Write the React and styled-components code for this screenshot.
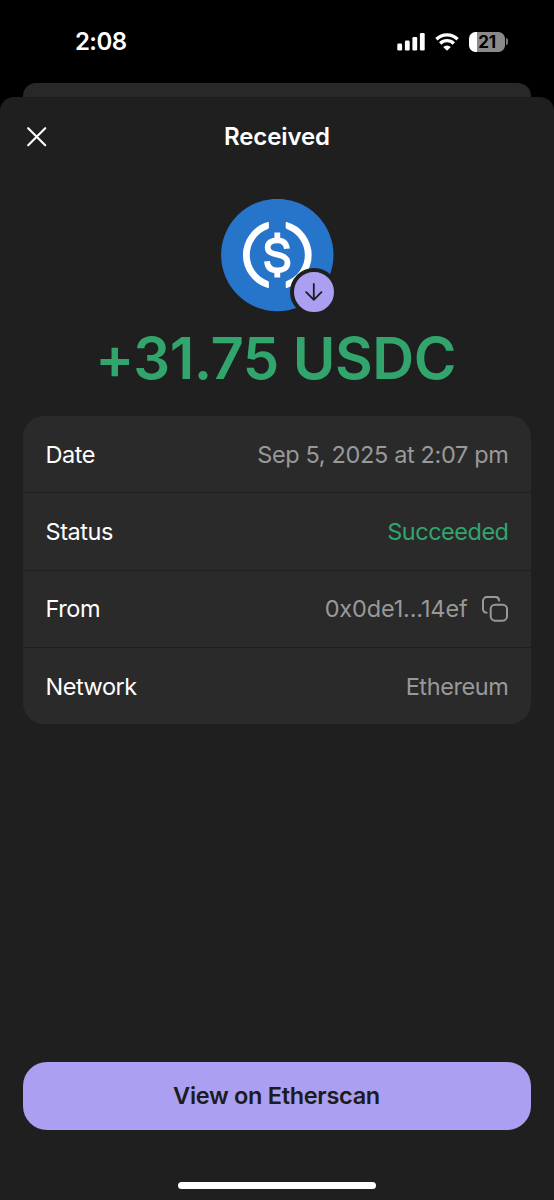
import styled, { createGlobalStyle } from 'styled-components'

const details = [
  { label: 'Date', value: 'Sep 5, 2025 at 2:07 pm', spacing: '-0.35px' },
  { label: 'Status', value: 'Succeeded', tone: 'success', spacing: '-0.5px' },
  { label: 'From', value: '0x0de1...14ef', copy: true, spacing: '-0.15px' },
  { label: 'Network', value: 'Ethereum', spacing: '-0.4px' },
]

export default function App() {
  return (
    <Screen>
      <GlobalStyle />
      <StatusBar>
        <Time>2:08</Time>
        <Indicators>
          <SignalIcon />
          <WifiIcon />
          <Battery>
            <BatteryBody>21</BatteryBody>
            <BatteryCap />
          </Battery>
        </Indicators>
      </StatusBar>
      <BackSheet />
      <Sheet>
        <Header>
          <CloseButton aria-label="Close"><CloseIcon /></CloseButton>
          <Title>Received</Title>
        </Header>
        <Token>
          <UsdcIcon />
          <Badge><ArrowIcon /></Badge>
        </Token>
        <Amount>+31.75 USDC</Amount>
        <Card>
          {details.map((item) => (
            <Row key={item.label}>
              <Label>{item.label}</Label>
              <Value $tone={item.tone} $spacing={item.spacing}>
                {item.value}
                {item.copy && <CopyIcon />}
              </Value>
            </Row>
          ))}
        </Card>
        <Action>View on Etherscan</Action>
        <HomeIndicator />
      </Sheet>
    </Screen>
  )
}


////////////////////////////////////////////////////
// Icons
////////////////////////////////////////////////////

function SignalIcon() {
  return (
    <svg width="28" height="18" viewBox="0 0 28 18" fill="#fff">
      <rect x="0.3" y="10.6" width="4.8" height="7" rx="1.3" />
      <rect x="7.9" y="7.6" width="4.8" height="10" rx="1.3" />
      <rect x="15.4" y="4" width="4.8" height="13.6" rx="1.3" />
      <rect x="22.9" y="0" width="4.8" height="17.6" rx="1.3" />
    </svg>
  )
}

function WifiIcon() {
  return (
    <svg width="24" height="18" viewBox="0 0 24 18" fill="none" stroke="#fff">
      <path d="M1.4 6.2a15.2 15.2 0 0 1 21.2 0" strokeWidth="3.4" />
      <path d="M5.2 10.5a9.7 9.7 0 0 1 13.6 0" strokeWidth="3.3" />
      <path d="M8.2 13.9a5.5 5.5 0 0 1 7.6 0L12 17.8z" fill="#fff" stroke="none" />
    </svg>
  )
}

function CloseIcon() {
  return (
    <svg width="20" height="20" viewBox="0 0 20 20" fill="none" stroke="#fff" strokeWidth="2.1" strokeLinecap="round">
      <path d="M1.2 1.2l17 17M18.2 1.2L1.2 18.2" />
    </svg>
  )
}

function UsdcIcon() {
  return (
    <svg width="113" height="113" viewBox="-56.3 -56 113 113" fill="none">
      <circle r="56.2" fill="#2775ca" />
      <g fill="#fff">
        <path d="M-8.4 -32.2V-27.4Q-8.4 -26.4 -9.4 -26A27.7 27.7 0 0 0 -9.4 26Q-8.4 26.4 -8.4 27.4V32.2Q-8.4 33.3 -9.5 32.9A34.2 34.2 0 0 1 -9.5 -32.9Q-8.4 -33.3 -8.4 -32.2Z" />
        <path d="M8.4 -32.2V-27.4Q8.4 -26.4 9.4 -26A27.7 27.7 0 0 1 9.4 26Q8.4 26.4 8.4 27.4V32.2Q8.4 33.3 9.5 32.9A34.2 34.2 0 0 0 9.5 -32.9Q8.4 -33.3 8.4 -32.2Z" />
      </g>
      <g stroke="#fff" strokeWidth="5.8">
        <path d="M9.6 -6.2C9 -12 5.3 -14.7 0 -14.7C-6 -14.7 -9.6 -12 -9.6 -7.8C-9.6 -2.8 -5.5 -1.4 0 -0.3C6.5 1 10.2 2.8 10.2 8C10.2 12.7 6 15.4 0 15.4C-6 15.4 -9.8 12.3 -10.3 6.2" />
        <path d="M0 -22.6V-15M0 15V22.6" />
      </g>
    </svg>
  )
}

function ArrowIcon() {
  return (
    <svg width="18" height="18" viewBox="0 0 18 18" fill="none" stroke="#1c1c1c" strokeWidth="1.8" strokeLinecap="round" strokeLinejoin="round">
      <path d="M8.8 1v15.8M1.2 9.2l7.6 7.6 7.6-7.6" />
    </svg>
  )
}

function CopyIcon() {
  return (
    <svg width="26" height="26" viewBox="0 0 26 26" fill="none" stroke="#999" strokeWidth="2" strokeLinecap="round">
      <rect x="8.7" y="8.7" width="16.3" height="16" rx="4.4" />
      <path d="M17.1 4.4A3.8 3.8 0 0 0 13.4 0.9H5.2A4.2 4.2 0 0 0 1 5.1V12.7A4 4 0 0 0 4.6 16.7" />
    </svg>
  )
}


////////////////////////////////////////////////////
// Styles
////////////////////////////////////////////////////

const GlobalStyle = createGlobalStyle`
  * {
    box-sizing: border-box;
  }
  body {
    margin: 0;
    background: #000;
    font-family: Inter, "Liberation Sans", sans-serif;
    -webkit-font-smoothing: antialiased;
  }
  svg {
    display: block;
    flex: none;
  }
`

const Screen = styled.div`
  display: flex;
  flex-direction: column;
  width: 554px;
  height: 1200px;
  overflow: hidden;
  background: #000;
  color: #fff;
`

const StatusBar = styled.div`
  display: flex;
  justify-content: space-between;
  align-items: center;
  height: 83px;
  padding: 0 46px 0 75px;
`

const Time = styled.div`
  font-size: 24px;
  font-weight: 600;
  letter-spacing: -0.6px;
`

const Indicators = styled.div`
  display: flex;
  align-items: center;
  gap: 10px;
`

const Battery = styled.div`
  display: flex;
  align-items: center;
  gap: 1px;
`

const BatteryBody = styled.div`
  width: 36px;
  height: 20px;
  border-radius: 6.5px;
  background: linear-gradient(90deg, #fff 22%, #8a8a8a 22%);
  color: #000;
  font-size: 17px;
  font-weight: 700;
  letter-spacing: -0.3px;
  line-height: 20px;
  text-align: center;
`

const BatteryCap = styled.div`
  width: 2px;
  height: 7px;
  border-radius: 0 3px 3px 0;
  background: #777;
`

const BackSheet = styled.div`
  flex: none;
  height: 14px;
  margin: 0 23px;
  border-radius: 13px 13px 0 0;
  background: #282829;
`

const Sheet = styled.main`
  flex: 1;
  display: flex;
  flex-direction: column;
  align-items: center;
  padding: 0 23px 11px;
  border-radius: 14px 14px 0 0;
  background: #1f1f1f;
`

const Header = styled.header`
  display: grid;
  grid-template-columns: 28px 1fr 28px;
  align-items: center;
  width: 100%;
  height: 79px;
`

const CloseButton = styled.button`
  display: flex;
  justify-content: center;
  padding: 0;
  border: 0;
  background: none;
`

const Title = styled.h1`
  margin: 0;
  font-size: 24px;
  font-weight: 600;
  letter-spacing: -0.1px;
  text-align: center;
`

const Token = styled.div`
  position: relative;
  margin-top: 23px;
`

const Badge = styled.div`
  position: absolute;
  right: -4px;
  bottom: -4px;
  display: flex;
  align-items: center;
  justify-content: center;
  width: 48px;
  height: 48px;
  border: 4px solid #1f1f1f;
  border-radius: 50%;
  background: #ab9ff2;
`

const Amount = styled.div`
  height: 70px;
  margin-top: 11px;
  padding-right: 3px;
  color: #31a56c;
  font-size: 58px;
  font-weight: 600;
  letter-spacing: -0.5px;
  line-height: 70px;
  white-space: nowrap;
`

const Card = styled.section`
  width: 100%;
  height: 308px;
  margin-top: 23px;
  border-radius: 21px;
  overflow: hidden;
`

const Row = styled.div`
  display: flex;
  align-items: center;
  justify-content: space-between;
  height: 77.3px;
  padding: 0 22.5px;
  border-bottom: 1px solid #1f1f1f;
  background: #2a2a2a;
  font-size: 23.5px;

  &:last-child {
    border-bottom: 0;
  }
`

const Label = styled.div`
  color: #fff;
  letter-spacing: -0.45px;
`

const Value = styled.div`
  display: flex;
  align-items: center;
  gap: 14px;
  color: ${props => props.$tone === 'success' ? '#31a56c' : '#999'};
  letter-spacing: ${props => props.$spacing};

  svg {
    margin-right: 1px;
  }
`

const Action = styled.button`
  width: 100%;
  height: 68px;
  margin-top: auto;
  padding: 0 1px 1px 0;
  border: 0;
  border-radius: 24px;
  background: #ab9ff2;
  color: #1c1c1c;
  font-family: inherit;
  font-size: 23.5px;
  font-weight: 600;
  letter-spacing: -0.3px;
`

const HomeIndicator = styled.div`
  width: 198px;
  height: 7px;
  margin-top: 52px;
  border-radius: 4px;
  background: #fff;
`
